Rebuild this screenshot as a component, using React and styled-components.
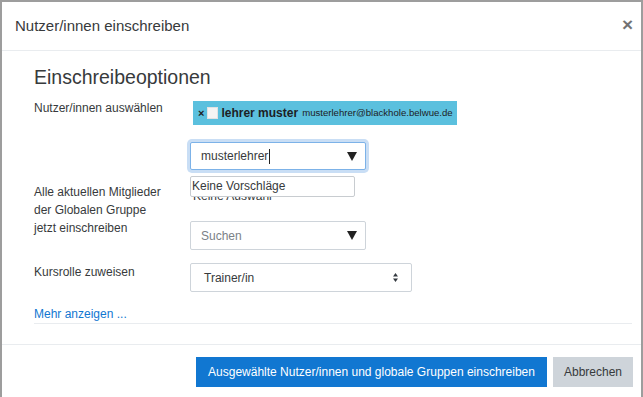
import React from 'react';
import styled, { createGlobalStyle } from 'styled-components';

const Global = createGlobalStyle`
  html, body { margin: 0; padding: 0; }
  body {
    background: #9d9d9d;
    font-family: "Liberation Sans", Arial, sans-serif;
    color: #373a3c;
    overflow: hidden;
  }
`;

const Backdrop = styled.div`
  height: 397px;
  box-sizing: border-box;
  padding: 2px 2px 0 2px;
  display: flex;
  overflow: hidden;
`;

const Modal = styled.div`
  flex: 1;
  background: #fff;
  display: flex;
  flex-direction: column;
  overflow: hidden;
  & > * { flex-shrink: 0; }
`;

const Header = styled.div`
  height: 48px;
  border-bottom: 1px solid #e9ecef;
  display: flex;
  align-items: center;
  justify-content: space-between;
  padding: 0 8px 0 13px;
`;

const Title = styled.h5`
  margin: 0;
  font-size: 15px;
  font-weight: 400;
  line-height: 1.2;
`;

const Close = styled.span`
  font-size: 19px;
  font-weight: 700;
  color: #000;
  opacity: 0.55;
  line-height: 1;
  margin-top: -3px;
`;

const Body = styled.div`
  padding: 15px 9px 20px 32px;
`;

const Heading = styled.h3`
  margin: 0 0 10px;
  font-size: 19.5px;
  font-weight: 400;
  line-height: 23px;
`;

const Row = styled.div`
  display: grid;
  grid-template-columns: 156px 1fr;
  margin-bottom: 13px;
  font-size: 12px;
  line-height: 18px;
`;

const Label = styled.div`
  width: 132px;
`;

const Field = styled.div`
  padding-top: ${p => p.$pt || 0}px;
  display: flex;
  flex-direction: column;
  align-items: flex-start;
`;

const Chip = styled.div`
  margin-top: 2px;
  margin-left: 3px;
  height: 24px;
  background: #5bc0de;
  display: inline-flex;
  align-items: center;
  padding: 0 4px 0 5px;
  color: #1d2125;
  white-space: nowrap;
`;

const ChipX = styled.span`
  font-weight: 700;
  font-size: 11px;
  margin-right: 3px;
`;

const Avatar = styled.span`
  width: 9px;
  height: 10px;
  background: #f4f4f4;
  border: 1px solid #e2e2e2;
  margin-right: 3px;
`;

const ChipName = styled.strong`
  font-size: 12px;
  margin-right: 4px;
`;

const ChipMail = styled.span`
  font-size: 9.6px;
`;

const InputWrap = styled.div`
  position: relative;
  margin-top: ${p => p.$mt || 0}px;
`;

const Box = styled.div`
  box-sizing: border-box;
  width: ${p => p.$w}px;
  height: ${p => p.$h}px;
  border: 1px solid ${p => (p.$focus ? '#7cb2e8' : '#ced4da')};
  box-shadow: ${p => (p.$focus ? '0 0 0 3px #c9def5' : 'none')};
  border-radius: 2px;
  display: flex;
  align-items: center;
  justify-content: space-between;
  padding: 0 ${p => p.$pr}px 0 ${p => p.$pl}px;
  font-size: 12px;
  color: ${p => (p.$placeholder ? '#7b8187' : '#373a3c')};
  background: #fff;
`;

const Caret = styled.span`
  display: inline-block;
  width: 1px;
  height: 15px;
  background: #222;
  vertical-align: middle;
  margin-left: 1px;
`;

const Suggestions = styled.div`
  position: absolute;
  left: 0;
  top: calc(100% + 6px);
  box-sizing: border-box;
  width: 165px;
  height: 21px;
  border: 1px solid #c8ccd0;
  border-radius: 2px;
  background: #fff;
  font-size: 12px;
  line-height: 19px;
  padding-left: 1px;
  color: #373a3c;
  z-index: 2;
`;

const Selection = styled.div`
  padding-left: 3px;
`;

const Link = styled.a`
  display: block;
  color: #1177d1;
  font-size: 12px;
  line-height: 18px;
  text-decoration: none;
  border-bottom: 1px solid #e9ecef;
`;

const Footer = styled.div`
  border-top: 1px solid #e9ecef;
  padding: 12px 8px;
  display: flex;
  justify-content: flex-end;
  gap: 6px;
`;

const Button = styled.button`
  height: 30px;
  border: 0;
  border-radius: 0;
  padding: 0 ${p => (p.$primary ? 12 : 11)}px;
  font-family: "Liberation Sans", Arial, sans-serif;
  font-size: 12px;
  background: ${p => (p.$primary ? '#1177d1' : '#ced4da')};
  color: ${p => (p.$primary ? '#fff' : '#373a3c')};
`;

const Down = () => (
  <svg width="10" height="9" viewBox="0 0 10 9">
    <polygon points="0,0 10,0 5,9" fill="#222" />
  </svg>
);

const UpDown = () => (
  <svg width="5" height="9" viewBox="0 0 5 9">
    <polygon points="0,3.5 5,3.5 2.5,0" fill="#343a40" />
    <polygon points="0,5.5 5,5.5 2.5,9" fill="#343a40" />
  </svg>
);

export default function App() {
  return (
    <>
      <Global />
      <Backdrop>
        <Modal>
          <Header>
            <Title>Nutzer/innen einschreiben</Title>
            <Close>×</Close>
          </Header>
          <Body>
            <Heading>Einschreibeoptionen</Heading>
            <Row>
              <Label>Nutzer/innen auswählen</Label>
              <Field>
                <Chip>
                  <ChipX>×</ChipX>
                  <Avatar />
                  <ChipName>lehrer muster</ChipName>
                  <ChipMail>musterlehrer@blackhole.belwue.de</ChipMail>
                </Chip>
                <InputWrap $mt={17}>
                  <Box $w={176} $h={28} $pl={10} $pr={8} $focus>
                    <span>musterlehrer<Caret /></span>
                    <Down />
                  </Box>
                  <Suggestions>Keine Vorschläge</Suggestions>
                </InputWrap>
              </Field>
            </Row>
            <Row>
              <Label>Alle aktuellen Mitglieder der Globalen Gruppe jetzt einschreiben</Label>
              <Field $pt={4}>
                <Selection>Keine Auswahl</Selection>
                <InputWrap $mt={16}>
                  <Box $w={176} $h={29} $pl={10} $pr={8} $placeholder>
                    <span>Suchen</span>
                    <Down />
                  </Box>
                </InputWrap>
              </Field>
            </Row>
            <Row>
              <Label>Kursrolle zuweisen</Label>
              <Field>
                <Box $w={222} $h={29} $pl={13} $pr={13}>
                  <span>Trainer/in</span>
                  <UpDown />
                </Box>
              </Field>
            </Row>
            <Link href="#">Mehr anzeigen ...</Link>
          </Body>
          <Footer>
            <Button $primary>Ausgewählte Nutzer/innen und globale Gruppen einschreiben</Button>
            <Button>Abbrechen</Button>
          </Footer>
        </Modal>
      </Backdrop>
    </>
  );
}
